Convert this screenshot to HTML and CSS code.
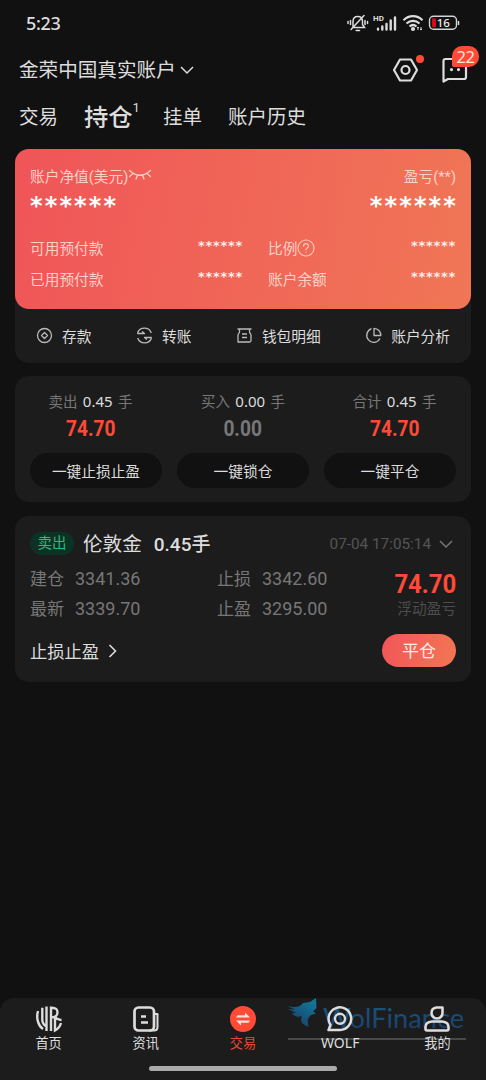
FILE: index.html
```html
<!DOCTYPE html>
<html lang="zh-CN">
<head>
<meta charset="utf-8">
<meta name="viewport" content="width=device-width, initial-scale=1">
<title>持仓</title>
<link rel="stylesheet" href="styles.css">
</head>
<body>
<div class="app">
  <header class="status">
    <span class="clock">5:23</span>
    <div class="status-icons">
      <svg width="22" height="18" viewBox="0 0 22 18" fill="none" stroke="#ddd" stroke-width="1.500" stroke-linecap="round"><path d="M6 12.500V7.500C6 4.300 8 2.500 10.800 2.500S15.500 4.300 15.500 7.500V10.500L17.500 13.500H6M9.200 16.500H12.500M4 15.500L17 1.500M3.500 6.500V10.500M1 7.500V9.500M18 6.500V10.500M20.500 7.500V9.500"/></svg>
      <svg width="25" height="18" viewBox="0 0 25 18" fill="none" stroke="#ddd"><text class="hd" x="0" y="6.500" stroke="none" fill="#ddd">HD</text><path stroke-width="2.400" stroke-linecap="round" d="M5 15.500V14.800M9.300 15.500V12.500M13.500 15.500V10M17.700 15.500V6.500M22 15.500V3.500"/></svg>
      <svg width="22" height="18" viewBox="0 0 22 18" fill="none" stroke="#ddd" stroke-width="2.200"><path d="M1.500 6.200C7 .800 15 .800 20.500 6.200M4.500 9.500C8.300 6 13.700 6 17.500 9.500M7.500 12.500C9.700 10.600 12.300 10.600 14.500 12.500"/><circle cx="11" cy="15" r="1" /><path stroke-width="1" d="M16 16V13M15 14L16 13L17 14M19 13V16M18 15L19 16L20 15"/></svg>
      <svg width="32" height="18" viewBox="0 0 32 18"><rect x="1.500" y="2.300" width="27" height="13" rx="4" fill="none" stroke="#d4d4d4" stroke-width="1.400"/><rect x="4" y="4.300" width="4" height="9" rx="1" fill="#d30b18"/><path d="M30.500 7V11" stroke="#ddd" stroke-width="1.500"/><text class="charge" x="8.700" y="12.800" fill="#eee">16</text></svg>
    </div>
  </header>

  <div class="account">
    <span>金荣中国真实账户</span>
    <svg class="down" width="14" height="10" viewBox="0 0 14 10" fill="none" stroke="#ddd" stroke-width="1.500"><path d="M1 2L7 8L13 2"/></svg>
    <div class="tools">
      <div class="tool">
        <svg width="27" height="26" viewBox="0 0 27 26" fill="none" stroke="#ddd" stroke-width="2.200" stroke-linejoin="round"><path d="M8 2.500H19L25 13L19 23.500H8L2 13Z"/><circle cx="13.500" cy="13" r="4"/></svg>
        <i class="dot"></i>
      </div>
      <div class="tool">
        <svg width="28" height="28" viewBox="0 0 28 28" fill="none" stroke="#ddd" stroke-width="2.200" stroke-linejoin="round"><path d="M2.500 25.500V5Q2.500 3 4.500 3H23Q25 3 25 5V21Q25 23 23 23H7L2.500 25.500Z"/><path stroke-width="3.200" stroke-linecap="round" d="M10.500 13.500V13.600M17.500 13.500V13.600"/></svg>
        <b class="count">22</b>
      </div>
    </div>
  </div>

  <nav class="tabs">
    <a>交易</a><a class="active">持仓<sup>1</sup></a><a>挂单</a><a>账户历史</a>
  </nav>

  <section class="panel wallet">
    <div class="balance">
      <div class="row heading"><span class="with-icon">账户净值(美元)<svg width="24" height="12" viewBox="0 0 24 12" fill="none" stroke="#ffd0c8" stroke-width="1.300" stroke-linecap="round"><path d="M1.500 1.500Q12 11 22.500 1.500M5 4.500L1.500 7.500M9.500 6.200L8 10M14.500 6.200L16 10M19 4.500L22.500 7.500"/></svg></span><span>盈亏(**)</span></div>
      <div class="row stars"><span>******</span><span>******</span></div>
      <div class="grid">
        <div class="row"><span>可用预付款</span><b class="mask">******</b></div>
        <div class="row"><span class="with-icon">比例<svg width="18" height="18" viewBox="0 0 18 18" fill="none" stroke="#ffc5ba" stroke-width="1.200" stroke-linecap="round"><circle cx="9" cy="9" r="8"/><path d="M6.500 7.200C6.500 3.800 11.500 3.900 11.500 7C11.500 8.800 9 8.800 9 10.800M9 13.100V13.200"/></svg></span><b class="mask">******</b></div>
        <div class="row"><span>已用预付款</span><b class="mask">******</b></div>
        <div class="row"><span>账户余额</span><b class="mask">******</b></div>
      </div>
    </div>
    <div class="actions">
      <span><svg width="17" height="17" viewBox="0 0 17 17"><circle cx="8.500" cy="8.500" r="7"/><path d="M8.500 5.500L11.500 8.500L8.500 11.500L5.500 8.500Z"/></svg>存款</span>
      <span><svg width="17" height="17" viewBox="0 0 17 17"><path d="M1.200 6.500H8.500L6 4.500M1.500 6A7.300 7.300 0 0 1 15.300 6M15.800 10.500H8.500L11 12.500M15.500 11A7.300 7.300 0 0 1 1.700 11"/></svg>转账</span>
      <span><svg width="17" height="17" viewBox="0 0 17 17"><path d="M1.500 2H15.500M3.500 2V5L2 8V15H13.500Q15 15 15 13.500V8L13.500 5V2M6 7H11M6 10.500H11"/></svg>钱包明细</span>
      <span><svg width="17" height="17" viewBox="0 0 17 17"><path d="M6.500 1.700A7 7 0 1 0 15 11.500M9 1.300V8.500H15.800A7 7 0 0 0 9 1.300Z"/></svg>账户分析</span>
    </div>
  </section>

  <section class="panel summary">
    <div class="side"><p>卖出 <em>0.45</em> 手</p><strong>74.70</strong><button>一键止损止盈</button></div>
    <div class="side"><p>买入 <em>0.00</em> 手</p><strong class="zero">0.00</strong><button>一键锁仓</button></div>
    <div class="side"><p>合计 <em>0.45</em> 手</p><strong>74.70</strong><button>一键平仓</button></div>
  </section>

  <section class="panel position">
    <div class="position-head">
      <span class="badge">卖出</span><span class="symbol">伦敦金</span><b class="lots">0.45手</b>
      <time>07-04 17:05:14</time>
      <svg width="14" height="10" viewBox="0 0 14 10" fill="none" stroke="#777" stroke-width="1.500"><path d="M1 2L7 8L13 2"/></svg>
    </div>
    <div class="quotes">
      <div class="prices">
        <p>建仓<em>3341.36</em></p><p>止损<em>3342.60</em></p>
        <p>最新<em>3339.70</em></p><p>止盈<em>3295.00</em></p>
      </div>
      <div class="profit"><strong>74.70</strong><span>浮动盈亏</span></div>
    </div>
    <div class="position-foot">
      <span class="with-icon">止损止盈<svg class="next" width="9" height="14" viewBox="0 0 9 14" fill="none" stroke="#ddd" stroke-width="1.600"><path d="M1.500 1L7.500 7L1.500 13"/></svg></span>
      <button>平仓</button>
    </div>
  </section>

  <footer class="dock">
    <svg class="brand" width="180" height="44" viewBox="0 0 180 44">
      <defs><linearGradient id="wolf" x1="0" y1="1" x2=".7" y2="0"><stop stop-color="#173a68"/><stop offset="1" stop-color="#147fa8"/></linearGradient>
      <linearGradient id="word" x1="0" y1="0" x2="0" y2="1"><stop stop-color="#17628c"/><stop offset="1" stop-color="#1b3f73"/></linearGradient></defs>
      <path fill="url(#wolf)" d="M29 -1L29.500 9L26 12.500L29 14.500L24 16C20 19 20 24 22 28C15 26 12.500 22 15 17C10 19 7 17 5 14L9 14L1 10L8 10.500L0 7C9 9 13 8 16 4L23 3Z"/>
      <text class="word" x="36" y="29" textLength="141" lengthAdjust="spacingAndGlyphs" fill="url(#word)">WolFinance</text>
      <path d="M1 40H179" stroke="#4d4d4d" stroke-width="2"/>
    </svg>
    <div class="dock-items">
      <a><svg width="28" height="28" viewBox="0 0 28 28" fill="none" stroke="#ddd" stroke-width="2.400"><path d="M3 6C1 13 3 20.500 8 24M7.300 2.800V15Q7.300 19 11.500 21.500M11.500 1.500V26M16 26V2.700C21 2.500 22.500 4.500 22.500 7.500C22.500 11 20 12.500 16 12.500M20 13V25.500C23 24 25 21.500 26 18M20 11.500Q22 15 26.500 15"/></svg>首页</a>
      <a><svg width="28" height="28" viewBox="0 0 28 28" fill="none" stroke="#ddd" stroke-width="2.700" stroke-linejoin="round"><rect x="2.500" y="2.500" width="19.500" height="23" rx="4"/><path stroke-width="2" d="M22.500 9H25.500V22Q25.500 25.500 22 25.500H17"/><path d="M9 11.500H14M9 17.500H16"/></svg>资讯</a>
      <a class="current"><svg width="28" height="28" viewBox="0 0 28 28"><circle cx="14" cy="14" r="13" fill="#ff4b36"/><path d="M7 12.500H21L16 7.500V10.300H8.500ZM21 15.500H7L12 20.500V17.700H19.500Z" fill="#ffe1dc"/></svg>交易</a>
      <a><svg width="28" height="28" viewBox="0 0 28 28" fill="none" stroke="#ddd" stroke-width="2.500" stroke-linejoin="round"><path d="M2.500 25H14A11.300 11.300 0 1 0 4.500 20Z"/><circle cx="14" cy="13.800" r="5" stroke-width="2.400"/></svg><span class="latin">WOLF</span></a>
      <a><svg width="28" height="28" viewBox="0 0 28 28" fill="none" stroke="#ddd" stroke-width="2.600" stroke-linejoin="round"><path d="M19.500 2.500H13.500Q8.500 3 8.500 8A5.500 5.500 0 0 0 19.500 8ZM9 16.500H19Q25.500 17 25.500 22V24Q25.500 25.500 24 25.500H4Q2.500 25.500 2.500 24V22Q2.500 17 9 16.500Z"/></svg>我的</a>
    </div>
    <div class="handle"></div>
  </footer>
</div>
</body>
</html>
```
FILE: styles.css
```css
* { box-sizing: border-box; }
body { margin: 0; background: #111; color: #ddd; font-family: Roboto, "Noto Sans CJK SC", sans-serif; }
p { margin: 0; }
em { font-style: normal; }
svg { display: block; flex: none; overflow: visible; }
button { border: 0; padding: 0 0 2px; font-family: inherit; color: #ddd; }
.app { width: 486px; height: 1080px; display: flex; flex-direction: column; overflow: hidden; }

.status { height: 45px; display: flex; align-items: center; justify-content: space-between; padding: 0 26px; }
.clock { font: 500 18px/20px "Noto Sans", sans-serif; letter-spacing: -.3px; }
.status-icons { display: flex; gap: 4px; }
.hd { font: 700 8px Roboto, sans-serif; }
.charge { font: 500 11.500px "Noto Sans", sans-serif; }

.account { height: 49px; display: flex; align-items: center; padding: 0 17px 0 19px; font-size: 19.600px; line-height: 30px; }
.account > span { padding-top: 2px; }
.down { margin-left: 4px; }
.tools { display: flex; align-items: center; gap: 22px; margin-left: auto; }
.tool { position: relative; }
.dot { position: absolute; top: -2px; right: -5px; width: 8px; height: 8px; border-radius: 50%; background: #ff4b36; }
.count { position: absolute; top: -10px; left: 11px; width: 27px; height: 21px; border-radius: 10px 10px 10px 2px; background: #ff4b36; color: #ffe8df; font: 400 16.500px/21px "Noto Sans", sans-serif; text-align: center; letter-spacing: -.4px; }

.tabs { height: 55px; display: flex; align-items: center; padding: 1px 19px 8px; font-size: 19.500px; line-height: 40px; white-space: nowrap; }
.tabs a + a { margin-left: 26px; }
.tabs .active { display: flex; width: 53px; font-size: 24.300px; font-weight: 500; }
.tabs sup { font-size: 13px; font-weight: 400; line-height: 20px; align-self: flex-start; vertical-align: baseline; }

.panel { margin: 0 15px; flex: none; border-radius: 14px; background: #1c1c1c; }
.row { display: flex; justify-content: space-between; align-items: center; }
.with-icon { display: flex; align-items: center; }

.wallet { height: 214px; }
.balance { height: 160px; padding: 14px 15px 0; border-radius: 14px; background: linear-gradient(100deg, #f05558, #f07656); color: #ffd0c8; font-size: 14.700px; }
.heading { height: 24px; }
.stars { height: 33px; padding-top: 4px; color: #fff; font: 700 24px/32px "DejaVu Sans", sans-serif; letter-spacing: 2.150px; }
.stars span:last-child { margin-right: -2px; }
.grid { display: grid; grid-template-columns: 213px 188px; grid-auto-rows: 31px; column-gap: 25px; padding-top: 12px; }
.mask { color: #ffeee9; font: 700 13px/20px "DejaVu Sans", sans-serif; letter-spacing: .7px; padding-bottom: 4px; }
.actions { height: 54px; display: flex; align-items: center; justify-content: space-between; padding: 0 21px 1px; font-size: 14.700px; }
.actions span { display: flex; align-items: center; gap: 9px; }
.actions svg { fill: none; stroke: #bbb; stroke-width: 1.300; stroke-linejoin: round; }

.summary { height: 126px; margin-top: 13px; display: grid; grid-template-columns: repeat(3, 132px); justify-content: space-between; padding: 14px 15px 0; }
.side { display: flex; flex-direction: column; align-items: center; font-size: 14.500px; color: #777; }
.side p { line-height: 22px; word-spacing: 1.700px; margin-left: -11px; }
.side:nth-child(2) p { margin-left: 0; }
.side:last-child p { margin-left: 9px; }
.side em { color: #ddd; font-family: "Noto Sans", sans-serif; font-size: 15px; }
.side strong { line-height: 24px; margin: 3px 0 12px; font-size: 21.500px; transform: scaleX(.89); }
.side:first-child strong { margin-left: -11px; }
.side:last-child strong { margin-left: 9px; }
strong { color: #ff4b36; font-weight: 700; }
.side .zero { color: #777; }
.side button { width: 132px; height: 35px; padding-bottom: 1px; border-radius: 18px; background: #111; font-size: 14.700px; }

.position { height: 166px; margin-top: 14px; padding: 14px 15px; }
.position-head { display: flex; align-items: center; height: 27px; }
.badge { width: 44px; height: 23px; border-radius: 12px; background: #0b3325; color: #2fb97f; font-size: 14.500px; line-height: 23px; text-align: center; }
.symbol { margin-left: 9px; font-size: 19.600px; line-height: 24px; padding-top: 2px; }
.lots { margin-left: 12px; font-size: 19px; font-weight: 500; line-height: 24px; padding-top: 2px; }
.position-head time { margin: 0 8px 0 auto; color: #555; font-size: 15.300px; }
.position-head svg { margin-right: 3px; }
.quotes { display: flex; justify-content: space-between; height: 64px; padding-top: 7px; }
.prices { display: grid; grid-template-columns: 187px 120px; grid-auto-rows: 30px; color: #777; font-size: 17px; line-height: 30px; }
.prices em { margin-left: 11px; font-size: 18px; }
.profit { display: flex; flex-direction: column; align-items: flex-end; color: #4d4d4d; font-size: 14.700px; line-height: 22px; }
.profit strong { font-size: 26px; line-height: 28px; padding-top: 6px; transform: scaleX(.92); transform-origin: right; }
.position-foot { display: flex; justify-content: space-between; align-items: center; padding-top: 13px; font-size: 17.300px; }
.next { margin-left: 9px; }
.position-foot button { width: 74px; height: 33px; border-radius: 17px; background: linear-gradient(100deg, #f25659, #f27652); color: #ffece5; font-size: 17px; }

.dock { position: relative; margin-top: auto; height: 82px; flex: none; border-radius: 14px 14px 0 0; background: #1c1c1c; }
.dock-items { position: relative; display: grid; grid-template-columns: repeat(5, 1fr); height: 67px; padding-top: 7px; }
.dock-items a { display: flex; flex-direction: column; align-items: center; font-size: 13.200px; line-height: 21px; }
.dock-items .current { color: #e64836; }
.latin { font: 400 14px/20px "Noto Sans", sans-serif; }
.handle { width: 188px; height: 5px; margin: 1px auto 0; border-radius: 3px; background: #aaa; }
.brand { position: absolute; left: 287px; top: 1px; opacity: .9; }
.word { font: 400 27px Lato, sans-serif; }
```
